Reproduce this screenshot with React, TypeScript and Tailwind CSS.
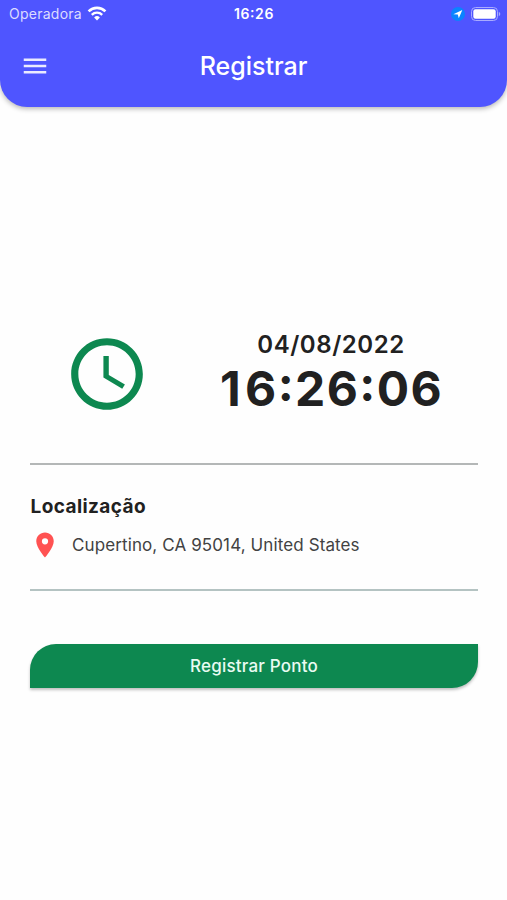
import { MdAccessTime, MdLocationOn, MdMenu } from "react-icons/md";

function WifiIcon() {
  return (
    <svg viewBox="0 0 20 15" className="h-[15px] w-[20px]" fill="none" aria-hidden="true">
      <path d="M1.6 5.4a11.9 11.9 0 0 1 16.8 0" stroke="white" strokeWidth="2.7" />
      <path d="M4.8 8.8a7.4 7.4 0 0 1 10.4 0" stroke="white" strokeWidth="2.4" />
      <path d="M10 14.4 7.1 11.5a4.1 4.1 0 0 1 5.8 0z" fill="white" />
    </svg>
  );
}

function LocationBadge() {
  return (
    <svg viewBox="0 0 14 14" className="h-[14px] w-[14px]" aria-hidden="true">
      <circle cx="7" cy="7" r="7" fill="#0a84ff" />
      <path d="M11.3 2.9 7.8 11.2 6.8 7.6 2.4 7.2z" fill="white" />
    </svg>
  );
}

function BatteryIcon() {
  return (
    <svg viewBox="0 0 30 14" className="h-[14px] w-[30px]" aria-hidden="true">
      <rect x="0.5" y="0.5" width="26" height="13" rx="4" fill="none" stroke="#a9abff" />
      <rect x="2.3" y="2.3" width="22.4" height="9.4" rx="2.2" fill="white" />
      <path d="M27.8 4.8c2 .8 2 3.6 0 4.4z" fill="#a9abff" />
    </svg>
  );
}

function StatusBar() {
  return (
    <div className="grid h-[27px] grid-cols-3 items-center text-[14px] leading-[27px] text-white">
      <div className="flex items-center gap-[5px] pl-[9px]">
        <span className="tracking-[0.25px] text-[#dcdcff]">Operadora</span>
        <WifiIcon />
      </div>
      <span className="pl-px text-center font-semibold tracking-[0.6px] [font-feature-settings:'case']">
        16:26
      </span>
      <div className="flex items-center justify-end gap-[6px] pr-[6px]">
        <LocationBadge />
        <BatteryIcon />
      </div>
    </div>
  );
}

export default function App() {
  return (
    <div className="flex h-[900px] w-[507px] flex-col bg-[#fefefe] font-['Inter',sans-serif] text-[#212121]">
      <header className="h-[107px] rounded-b-[27px] bg-[#4f55ff] shadow-[0_2px_5px_rgba(0,0,0,0.28)]">
        <StatusBar />
        <div className="grid h-[78px] grid-cols-3 items-center text-white">
          <button aria-label="Menu" className="pl-[20px]">
            <MdMenu className="size-[30px] text-[#ebebff]" />
          </button>
          <h1 className="text-center text-[25px] leading-[30px] font-medium">Registrar</h1>
        </div>
      </header>

      <main className="pt-[223px] pr-[29px] pl-[30px]">
        <div className="flex h-[88px] justify-between">
          <div className="flex w-[154px] justify-center pt-px">
            <MdAccessTime className="size-[86px] text-[#0d8850]" />
          </div>
          <div className="w-[294px] text-center">
            <p className="text-[24px] leading-[30px] font-semibold tracking-[0.55px]">04/08/2022</p>
            <p className="pl-px text-[48px] leading-[58px] font-bold tracking-[1.4px] [font-feature-settings:'case']">
              <span className="tracking-[4.4px]">1</span>6:26:06
            </p>
          </div>
        </div>

        <hr className="mt-[45px] border-t-2 border-[#b4b7b7]" />

        <section className="h-[124px] pt-[29px]">
          <h2 className="pl-[0.5px] text-[19px] leading-[26px] font-bold tracking-[0.4px]">
            Localização
          </h2>
          <div className="mt-[10px] flex items-center gap-[12px]">
            <MdLocationOn className="size-[30px] text-[#ff5252]" />
            <span className="text-[17px] leading-[24px] tracking-[0.11px] text-[#424242]">
              Cupertino, CA 95014, United States
            </span>
          </div>
        </section>

        <hr className="border-t-2 border-[#b4c3c2]" />

        <button className="mt-[53px] h-[44px] w-full rounded-tl-[26px] rounded-br-[26px] bg-[#0d8850] text-[17px] leading-[24px] font-medium tracking-[0.2px] text-[#e9fbf2] shadow-[0_2px_3px_rgba(0,0,0,0.25)]">
          Registrar Ponto
        </button>
      </main>
    </div>
  );
}
